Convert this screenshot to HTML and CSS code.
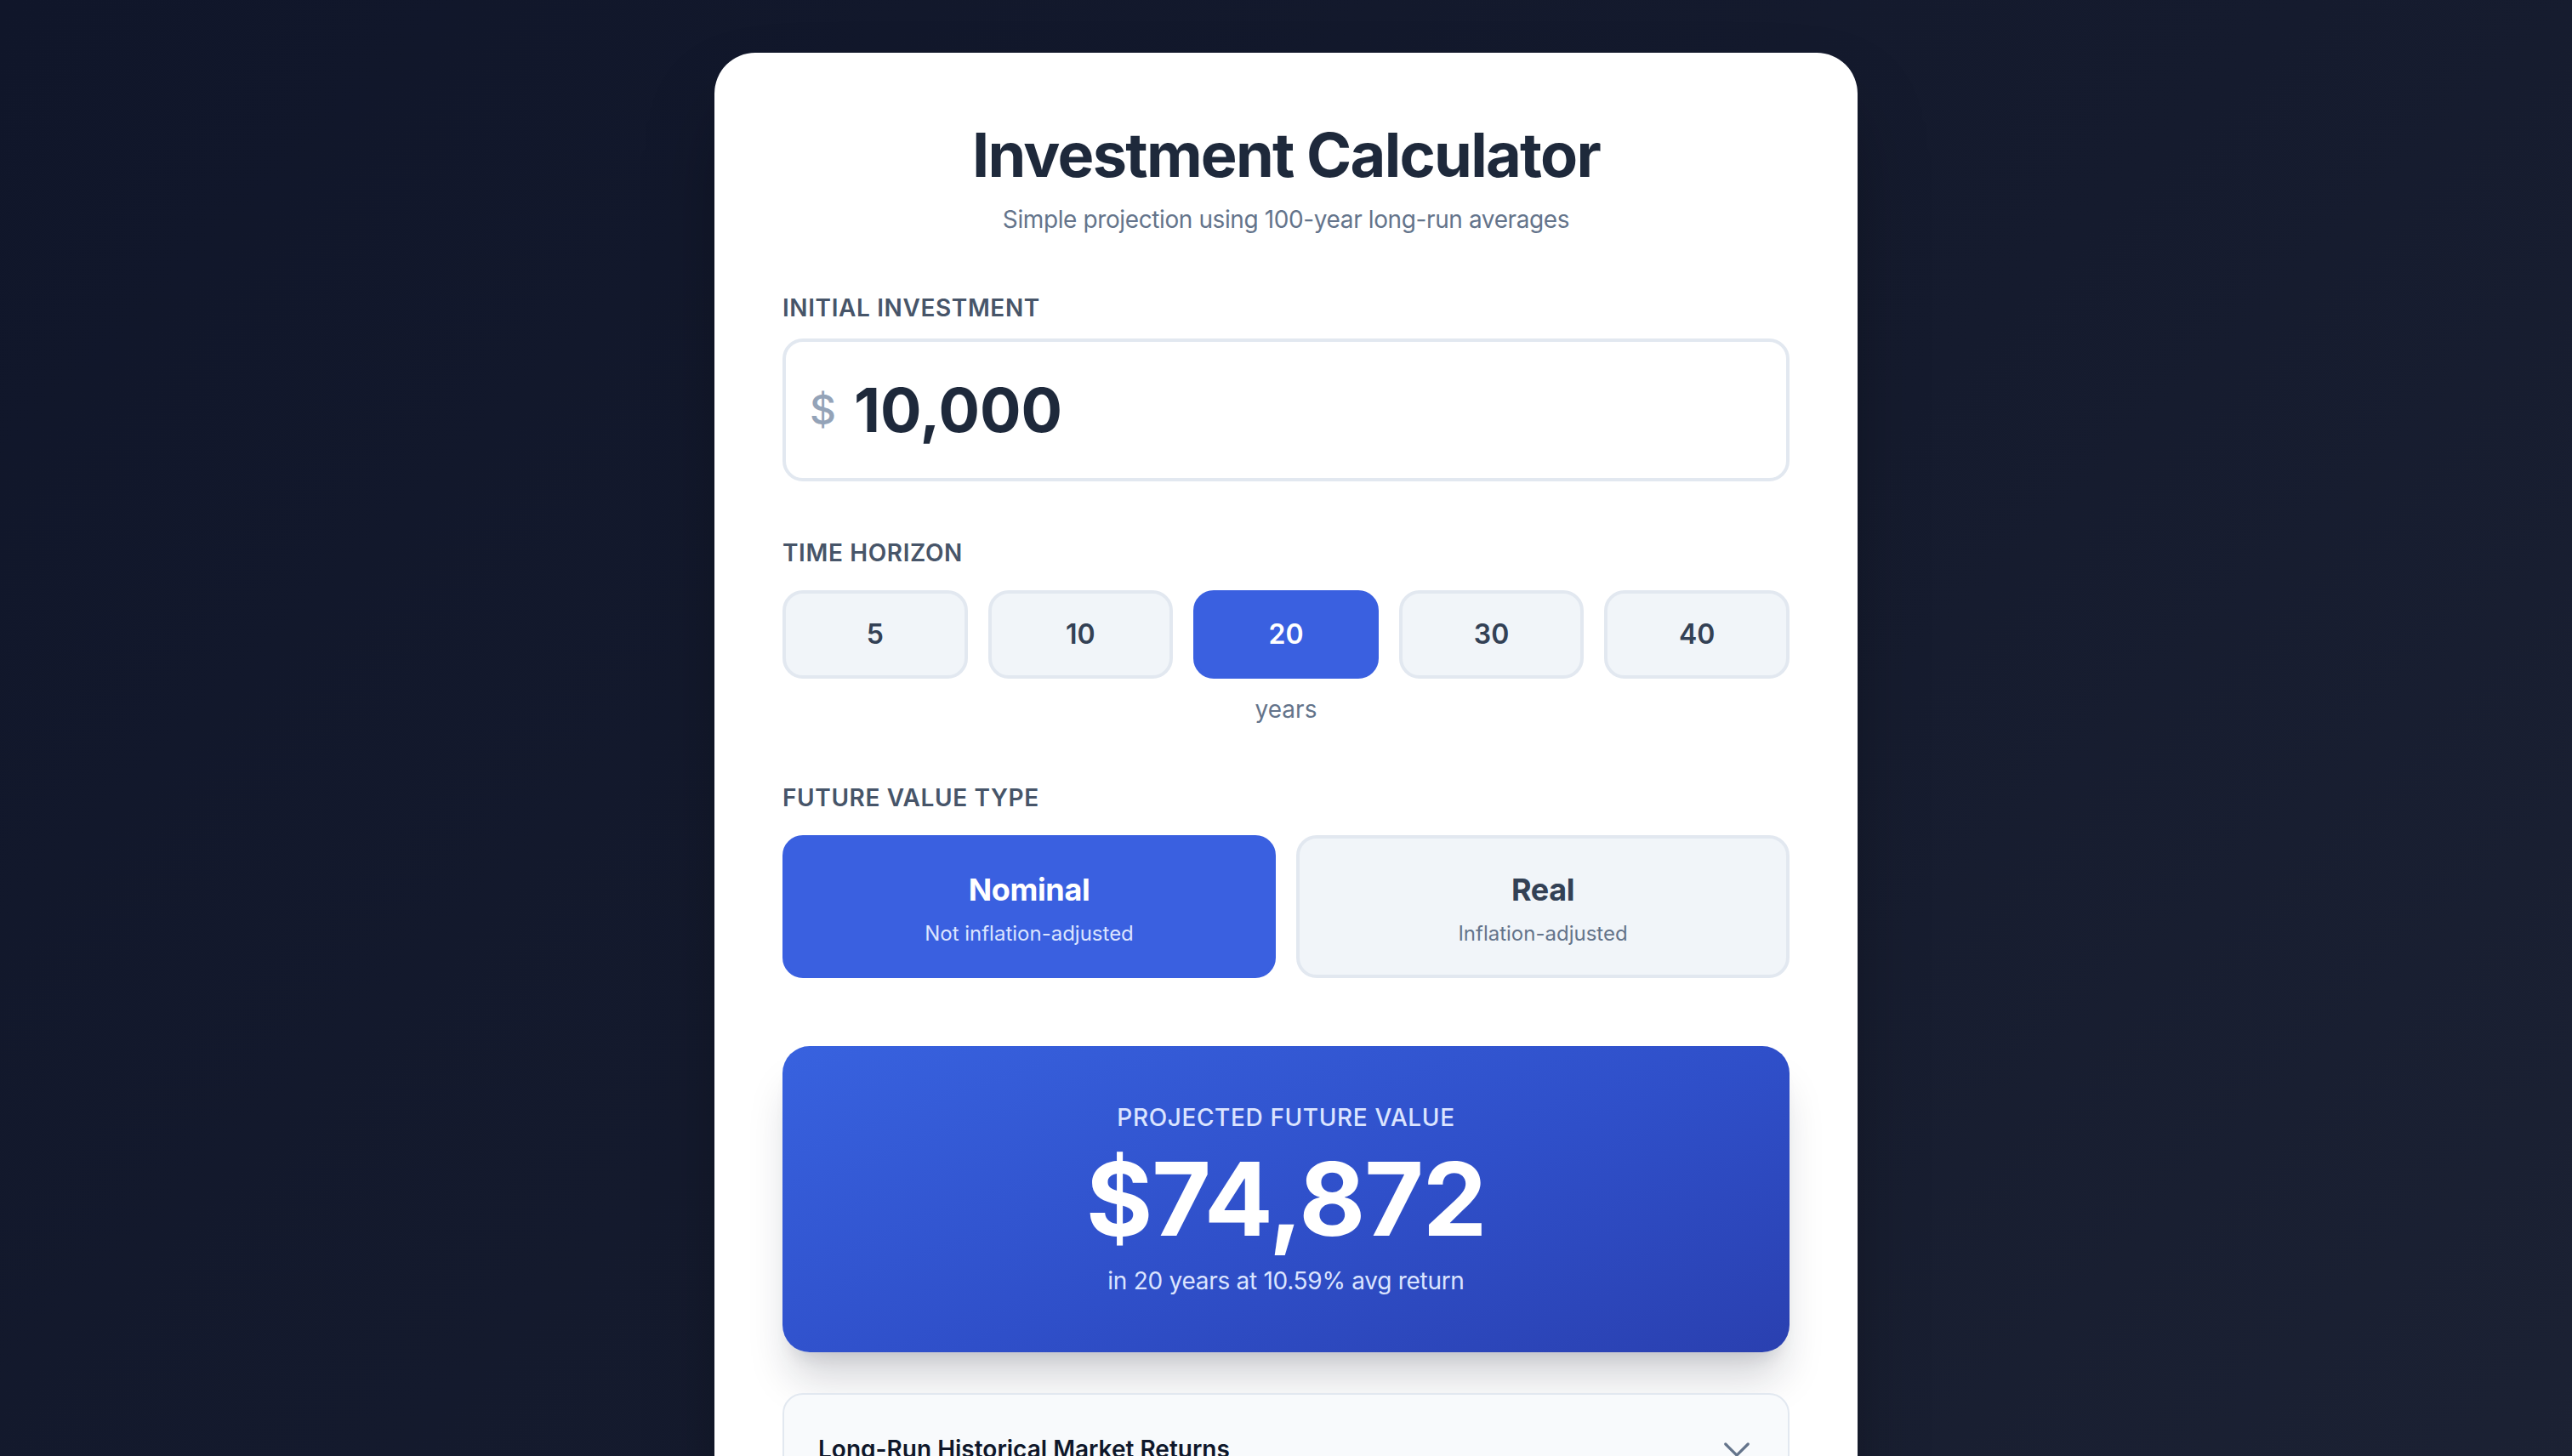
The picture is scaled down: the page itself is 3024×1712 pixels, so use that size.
FILE: index.html
```html
<!DOCTYPE html>
<html lang="en">
<head>
<meta charset="utf-8">
<title>Investment Calculator</title>
<link rel="stylesheet" href="styles.css">
</head>
<body>
<main class="page">
  <section class="card">
    <header class="head">
      <h1 class="title">Investment Calculator</h1>
      <p class="subtitle">Simple projection using 100-year long-run averages</p>
    </header>

    <div class="field">
      <label class="label label-tight" for="amount">Initial Investment</label>
      <div class="money">
        <span class="currency">$</span>
        <input id="amount" class="money-input" type="text" value="10,000">
      </div>
    </div>

    <div class="field">
      <div class="label">Time Horizon</div>
      <div class="years-grid">
        <button class="pill">5</button>
        <button class="pill">10</button>
        <button class="pill active">20</button>
        <button class="pill">30</button>
        <button class="pill">40</button>
      </div>
      <div class="years-note">years</div>
    </div>

    <div class="field">
      <div class="label">Future Value Type</div>
      <div class="type-grid">
        <button class="type active">
          <span class="type-name">Nominal</span>
          <span class="type-desc">Not inflation-adjusted</span>
        </button>
        <button class="type">
          <span class="type-name">Real</span>
          <span class="type-desc">Inflation-adjusted</span>
        </button>
      </div>
    </div>

    <div class="result">
      <div class="result-label">Projected Future Value</div>
      <div class="result-value">$74,872</div>
      <div class="result-note">in 20 years at 10.59% avg return</div>
    </div>

    <div class="accordion">
      <div class="acc-title">Long-Run Historical Market Returns</div>
      <svg class="chev" viewBox="0 0 20 20" width="40" height="40" aria-hidden="true">
        <path d="M3.4 7 L10 13.6 L16.6 7" fill="none" stroke="#64748b" stroke-width="1.6" stroke-linecap="round" stroke-linejoin="round"/>
      </svg>
    </div>
  </section>
</main>
</body>
</html>
```

FILE: styles.css
```css
* { box-sizing: border-box; }

html, body {
  margin: 0;
  padding: 0;
}

body {
  font-family: Inter, "Noto Sans", "Liberation Sans", sans-serif;
  background: linear-gradient(135deg, #10162a 0%, #151b2e 55%, #1c2234 100%);
  min-height: 100vh;
  color: #1e293b;
}

.page {
  display: flex;
  justify-content: center;
  padding: 62px 32px 64px;
}

.card {
  width: 1344px;
  background: #ffffff;
  border-radius: 48px;
  padding: 80px;
  box-shadow: 0 50px 100px -24px rgba(0, 0, 0, 0.4);
}

.head {
  text-align: center;
  margin-bottom: 64px;
}

.title {
  margin: 0;
  font-size: 72px;
  line-height: 80px;
  font-weight: 700;
  color: #1e293b;
  letter-spacing: -0.024em;
}

.subtitle {
  margin: 16px 0 0;
  font-size: 28px;
  line-height: 40px;
  color: #64748b;
  letter-spacing: -0.014em;
}

.field {
  margin-bottom: 64px;
}

.label {
  display: block;
  font-size: 28px;
  line-height: 40px;
  font-weight: 600;
  text-transform: uppercase;
  letter-spacing: 0.022em;
  color: #475569;
  margin-bottom: 24px;
}

.label-tight {
  margin-bottom: 16px;
}

.money {
  position: relative;
}

.currency {
  position: absolute;
  left: 32px;
  top: 50%;
  transform: translateY(-50%);
  font-size: 48px;
  line-height: 64px;
  font-weight: 500;
  color: #94a3b8;
}

.money-input {
  display: block;
  width: 100%;
  font-family: inherit;
  font-size: 72px;
  line-height: 80px;
  font-weight: 700;
  color: #1e293b;
  padding: 40px 32px 40px 80px;
  border: 4px solid #e2e8f0;
  border-radius: 24px;
  background: #ffffff;
  outline: none;
}

.years-grid {
  display: grid;
  grid-template-columns: repeat(5, 1fr);
  gap: 24px;
}

.pill {
  font-family: inherit;
  font-size: 32px;
  line-height: 48px;
  font-weight: 600;
  color: #334155;
  background: #f1f5f9;
  border: 4px solid #e2e8f0;
  border-radius: 24px;
  padding: 24px 0;
  cursor: pointer;
}

.pill.active,
.type.active {
  background: #3a60e0;
  border-color: #3a60e0;
  color: #ffffff;
}

.years-note {
  margin-top: 16px;
  text-align: center;
  font-size: 28px;
  line-height: 40px;
  color: #64748b;
}

.type-grid {
  display: grid;
  grid-template-columns: 1fr 1fr;
  gap: 24px;
}

.type {
  font-family: inherit;
  display: flex;
  flex-direction: column;
  align-items: center;
  gap: 8px;
  padding: 32px;
  background: #f1f5f9;
  border: 4px solid #e2e8f0;
  border-radius: 24px;
  color: #334155;
  cursor: pointer;
}

.type-name {
  font-size: 36px;
  line-height: 56px;
  font-weight: 650;
  letter-spacing: -0.01em;
}

.type-desc {
  font-size: 24px;
  line-height: 32px;
  color: #64748b;
}

.type.active .type-desc {
  color: #dbe4ff;
}

.result {
  margin-top: 80px;
  padding: 64px;
  border-radius: 32px;
  text-align: center;
  color: #ffffff;
  background: linear-gradient(160deg, #3862df 0%, #2f4fc9 55%, #2a40b0 100%);
  box-shadow: 0 40px 50px -10px rgba(15, 23, 42, 0.18), 0 16px 20px -12px rgba(15, 23, 42, 0.12);
}

.result-label {
  font-size: 28px;
  line-height: 40px;
  font-weight: 500;
  text-transform: uppercase;
  letter-spacing: 0.022em;
  color: #dbe4ff;
}

.result-value {
  margin: 16px 0 16px;
  font-size: 120px;
  line-height: 120px;
  font-weight: 700;
  letter-spacing: -0.01em;
}

.result-note {
  font-size: 28px;
  line-height: 40px;
  color: #dbe4ff;
  letter-spacing: -0.01em;
}

.accordion {
  margin-top: 48px;
  border: 2px solid #e2e8f0;
  border-radius: 24px;
  background: #f8fafc;
  padding: 44px 40px;
  display: flex;
  align-items: center;
  justify-content: space-between;
}

.acc-title {
  font-size: 28px;
  line-height: 40px;
  font-weight: 600;
  color: #0f172a;
}

.chev {
  display: block;
}
```
